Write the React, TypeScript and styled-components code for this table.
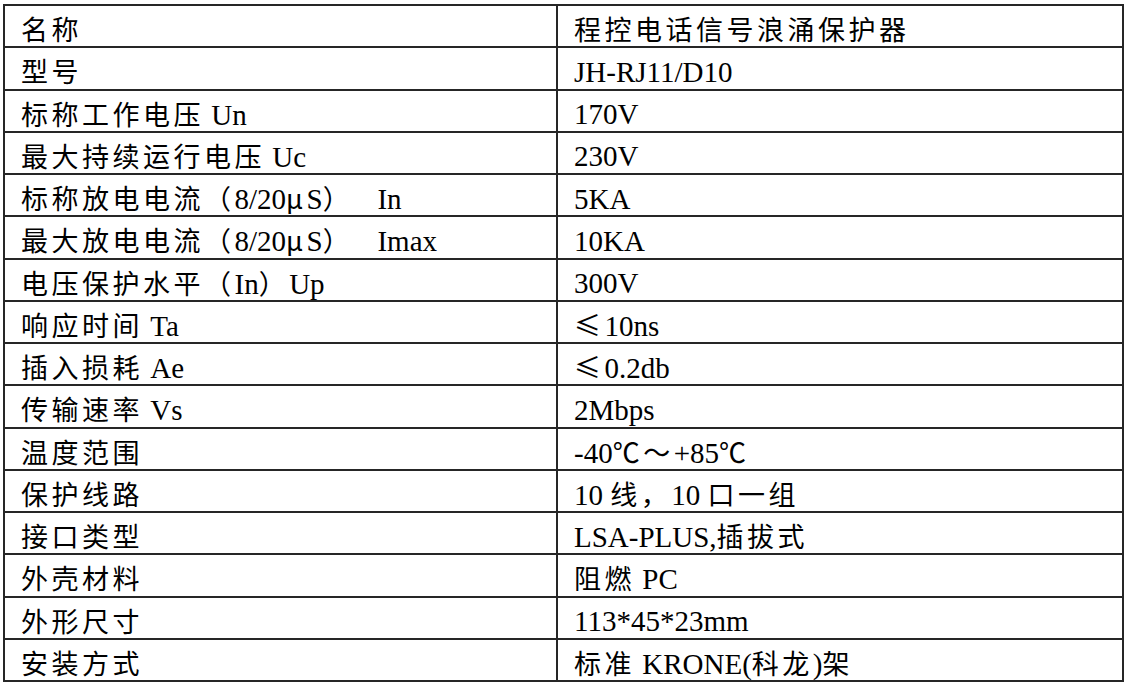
import React from 'react';
import styled, { createGlobalStyle } from 'styled-components';

const GlobalStyle = createGlobalStyle`
  html, body {
    margin: 0;
    padding: 0;
    background: #fff;
  }
`;

const Page = styled.div`
  padding: 4px 0 0 3px;
`;

const SpecTable = styled.table`
  width: 1121px;
  border-collapse: collapse;
  table-layout: fixed;
  border: 2px solid #262626;
`;

const Row = styled.tr`
  height: 42.25px;
`;

const Cell = styled.td`
  box-sizing: border-box;
  border: 2px solid #262626;
  padding: 7px 0 0 16px;
  font-family: 'Liberation Serif', 'Noto Sans CJK SC', serif;
  font-size: 29px;
  line-height: 32px;
  color: #000;
  white-space: pre;
  vertical-align: middle;
`;

const Wide = styled.span`
  font-family: 'Noto Sans CJK SC', sans-serif;
  font-size: 27px;
  line-height: 32px;
  letter-spacing: 3.5px;
`;

const rows: [string, string][] = [
  ['名称', '程控电话信号浪涌保护器'],
  ['型号', 'JH-RJ11/D10'],
  ['标称工作电压 Un', '170V'],
  ['最大持续运行电压 Uc', '230V'],
  ['标称放电电流（8/20μS）\u3000 In', '5KA'],
  ['最大放电电流（8/20μS）\u3000 Imax', '10KA'],
  ['电压保护水平（In）Up', '300V'],
  ['响应时间 Ta', '≤10ns'],
  ['插入损耗 Ae', '≤0.2db'],
  ['传输速率 Vs', '2Mbps'],
  ['温度范围', '-40℃～+85℃'],
  ['保护线路', '10 线，10 口一组'],
  ['接口类型', 'LSA-PLUS,插拔式'],
  ['外壳材料', '阻燃 PC'],
  ['外形尺寸', '113*45*23mm'],
  ['安装方式', '标准 KRONE(科龙)架'],
];

const WIDE = /[\u3000-\u9fff\uff00-\uffef\u2100-\u214f\u2200-\u22ff\u03bc]/;

function Mixed({ text }: { text: string }) {
  const runs: { wide: boolean; s: string }[] = [];
  for (const ch of text) {
    const wide = WIDE.test(ch);
    const last = runs[runs.length - 1];
    if (last && last.wide === wide) last.s += ch;
    else runs.push({ wide, s: ch });
  }
  return (
    <>
      {runs.map((r, i) => (r.wide ? <Wide key={i}>{r.s}</Wide> : <span key={i}>{r.s}</span>))}
    </>
  );
}

export default function App() {
  return (
    <Page>
      <GlobalStyle />
      <SpecTable>
        <colgroup>
          <col style={{ width: 553 }} />
          <col />
        </colgroup>
        <tbody>
          {rows.map(([k, v]) => (
            <Row key={k}>
              <Cell>
                <Mixed text={k} />
              </Cell>
              <Cell>
                <Mixed text={v} />
              </Cell>
            </Row>
          ))}
        </tbody>
      </SpecTable>
    </Page>
  );
}
